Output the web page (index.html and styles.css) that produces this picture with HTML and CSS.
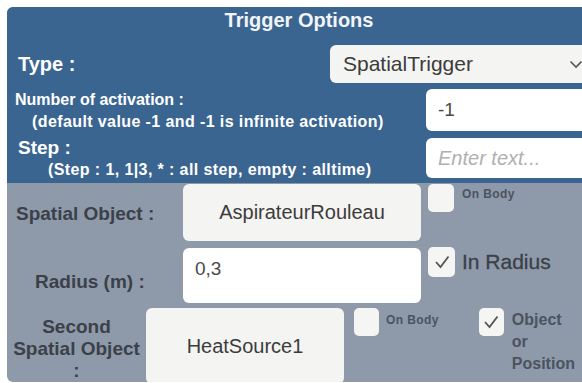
FILE: index.html
```html
<!DOCTYPE html>
<html lang="en">
<head>
  <meta charset="UTF-8" />
  <title>Trigger Options</title>
  <link rel="stylesheet" href="styles.css">
</head>
<body>
  <div class="panel">
    <div class="top">
      <h1>Trigger Options</h1>
      <div class="type-row">
        <span class="type-label">Type :</span>
        <div class="dropdown">
          <span>SpatialTrigger</span>
          <svg class="chevron" width="14" height="9" viewBox="0 0 14 9"><path d="M1.5 1.5 L7 7 L12.5 1.5" fill="none" stroke="#555" stroke-width="1.6"/></svg>
        </div>
      </div>
      <div class="field-row">
        <div class="field-label">
          <div class="main small">Number of activation :</div>
          <div class="hint hint-act">(default value -1 and -1 is infinite activation)</div>
        </div>
        <div class="input act-input">-1</div>
      </div>
      <div class="field-row step-row">
        <div class="field-label">
          <div class="main">Step :</div>
          <div class="hint hint-step">(Step : 1, 1|3, * : all step, empty : alltime)</div>
        </div>
        <div class="input step-input placeholder">Enter text...</div>
      </div>
    </div>

    <div class="bottom">
      <div class="obj-row">
        <div class="obj-label">Spatial Object :</div>
        <div class="box obj-box">AspirateurRouleau</div>
        <div class="check-item">
          <span class="check"></span>
          <span class="tiny">On Body</span>
        </div>
      </div>
      <div class="radius-row">
        <div class="radius-label">Radius (m) :</div>
        <div class="input radius-input">0,3</div>
        <div class="check-item">
          <span class="check checked">
            <svg width="18" height="16" viewBox="0 0 18 16"><path d="M3 8 L7.5 13 L15.5 2.5" fill="none" stroke="#555" stroke-width="1.8"/></svg>
          </span>
          <span class="big">In Radius</span>
        </div>
      </div>
      <div class="second-row">
        <div class="second-label">Second<br>Spatial Object<br>:</div>
        <div class="box second-box">HeatSource1</div>
        <div class="check-item second-check">
          <span class="check"></span>
          <span class="tiny">On Body</span>
        </div>
        <div class="check-item pos-check">
          <span class="check checked">
            <svg width="18" height="16" viewBox="0 0 18 16"><path d="M3 8 L7.5 13 L15.5 2.5" fill="none" stroke="#555" stroke-width="1.8"/></svg>
          </span>
          <span class="pos-text">Object<br>or<br>Position</span>
        </div>
      </div>
    </div>
  </div>
</body>
</html>
```

FILE: styles.css
```css
* {
  margin: 0;
  padding: 0;
  box-sizing: border-box;
}
body {
  font-family: "Liberation Sans", Arial, sans-serif;
  background: #fff;
  overflow: hidden;
  width: 582px;
  height: 383px;
}
.panel {
  margin: 7px 0 0 7px;
  width: 590px;
  height: 375px;
  border-radius: 6px;
  overflow: hidden;
  background: #8e9aaa;
}

/* blue header part */
.top {
  background: #3b6591;
  color: #fff;
  height: 176px;
  padding-top: 2px;
}
h1 {
  font-size: 20px;
  font-weight: bold;
  text-align: center;
  width: 584px;
  line-height: 22px;
  color: #f2f4f8;
}
.type-row {
  display: flex;
  align-items: center;
  margin-top: 14px;
  height: 38px;
}
.type-label {
  font-size: 20px;
  font-weight: bold;
  width: 323px;
  padding-left: 11px;
}
.dropdown {
  flex: 1;
  height: 38px;
  background: #f4f4f2;
  border-radius: 6px;
  display: flex;
  align-items: center;
  justify-content: space-between;
  padding: 0 22px 0 13px;
  color: #3c3c3c;
  font-size: 21px;
  margin-right: -8px;
}
.field-row {
  display: flex;
  margin-top: 6px;
}
.field-label {
  width: 419px;
  font-weight: bold;
  white-space: nowrap;
}
.main {
  font-size: 19px;
  padding-left: 11px;
  line-height: 20px;
}
.main.small {
  font-size: 16px;
  padding-left: 8px;
  line-height: 18px;
  margin-top: 2px;
}
.hint {
  font-size: 16px;
  line-height: 18px;
  letter-spacing: 0.4px;
}
.hint-act {
  padding-left: 25px;
  margin-top: 4px;
}
.hint-step {
  padding-left: 41px;
  margin-top: 3px;
}
.input {
  background: #fff;
  border-radius: 6px;
  display: flex;
  align-items: center;
  padding-left: 12px;
  font-size: 19px;
  color: #4a4a4a;
}
.act-input {
  flex: 1;
  height: 42px;
}
.step-row {
  margin-top: 7px;
}
.step-input {
  flex: 1;
  height: 40px;
  font-size: 20px;
}
.placeholder {
  color: #b0b0b0;
  font-style: italic;
}

/* gray lower part */
.bottom {
  color: #3b4049;
}
.obj-row, .radius-row, .second-row {
  display: flex;
}
.obj-row {
  height: 57px;
  margin-top: 1px;
}
.obj-label {
  width: 176px;
  padding-left: 9px;
  font-weight: bold;
  font-size: 19px;
  white-space: nowrap;
  align-self: center;
  margin-top: 3px;
}
.box {
  background: #f4f4f2;
  border-radius: 6px;
  display: flex;
  align-items: center;
  justify-content: center;
  font-size: 20px;
  color: #3c3c3c;
}
.obj-box {
  width: 238px;
  height: 57px;
}
.check-item {
  display: flex;
  align-items: flex-start;
  margin-left: 7px;
}
.check {
  width: 26px;
  height: 28px;
  background: #f5f5f3;
  border-radius: 5px;
  display: flex;
  align-items: center;
  justify-content: center;
}
.tiny {
  font-size: 12px;
  font-weight: bold;
  letter-spacing: 0.4px;
  color: #4b5360;
  margin-left: 8px;
  margin-top: 3px;
}
.radius-row {
  margin-top: 7px;
  height: 55px;
}
.radius-label {
  width: 176px;
  padding-left: 28px;
  font-weight: bold;
  font-size: 19px;
  white-space: nowrap;
  align-self: flex-end;
  margin-bottom: 10px;
}
.radius-input {
  width: 238px;
  height: 55px;
  align-items: flex-start;
  padding-top: 10px;
}
.radius-row .check {
  height: 30px;
  width: 27px;
}
.radius-row .check-item {
  margin-top: -1px;
}
.big {
  font-size: 21px;
  margin-left: 7px;
  margin-top: 3px;
  color: #3b4049;
  -webkit-text-stroke: 0.3px #3b4049;
}
.second-row {
  margin-top: 5px;
  height: 76px;
}
.second-label {
  width: 139px;
  text-align: center;
  font-weight: bold;
  font-size: 19px;
  line-height: 22px;
  white-space: nowrap;
  margin-top: 8px;
}
.second-box {
  width: 198px;
  height: 76px;
}
.second-check {
  margin-left: 10px;
}
.second-check .check, .pos-check .check {
  width: 25px;
  height: 28px;
}
.second-check .tiny {
  margin-left: 7px;
  margin-top: 5px;
}
.pos-check {
  margin-left: 40px;
}
.pos-text {
  font-size: 16px;
  font-weight: bold;
  line-height: 22px;
  color: #4b5360;
  margin-left: 8px;
  margin-top: 1px;
}
```
